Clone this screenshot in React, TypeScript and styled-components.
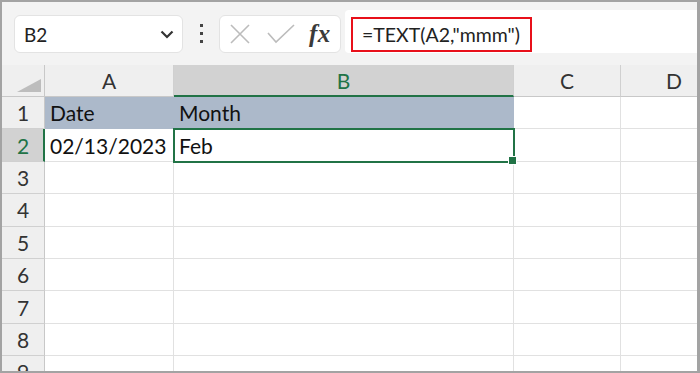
import React from 'react'
import styled, { createGlobalStyle, css } from 'styled-components'

const GlobalStyle = createGlobalStyle`
  html, body {
    margin: 0;
    padding: 0;
    background: #ffffff;
    overflow: hidden;
  }
  * {
    box-sizing: border-box;
  }
`

const green = '#217346'
const font = `Lato, 'Open Sans', sans-serif`

const Frame = styled.div`
  width: 700px;
  height: 373px;
  border: 2px solid #a3a3a3;
  border-right-width: 3px;
  background: #f3f3f3;
  display: flex;
  flex-direction: column;
  overflow: hidden;
  font-family: ${font};
`

const Toolbar = styled.div`
  height: 63px;
  flex: none;
  display: flex;
  align-items: flex-end;
  padding: 0 0 12px 12px;
`

const NameBox = styled.div`
  width: 169px;
  height: 38px;
  background: #fff;
  border: 1px solid #e3e3e3;
  border-radius: 6px;
  display: flex;
  align-items: center;
  justify-content: space-between;
  padding: 0 8px 0 9px;
  font-size: 19px;
  color: #222;
`

const Dots = styled.div`
  width: 3px;
  margin: 0 16px 10px 17px;
  display: flex;
  flex-direction: column;
  gap: 5px;

  span {
    display: block;
    width: 3px;
    height: 3px;
    background: #444;
  }
`

const ButtonBox = styled.div`
  width: 122px;
  height: 38px;
  background: #fff;
  border: 1px solid #e3e3e3;
  border-radius: 6px;
  display: flex;
  align-items: center;
  padding: 0 0 0 9px;
  gap: 16px;
`

const Fx = styled.span`
  font-family: 'Liberation Serif', 'DejaVu Serif', serif;
  font-style: italic;
  font-weight: bold;
  font-size: 25px;
  color: #3a3a3a;
  margin-left: -2px;
  letter-spacing: 0.5px;
`

const FormulaBar = styled.div`
  flex: 1;
  height: 43px;
  margin-left: 4px;
  background: #fff;
  border-radius: 4px 0 0 4px;
  padding: 7px 0 1px 6px;
  display: flex;
`

const FormulaText = styled.div`
  width: 181px;
  border: 2px solid #e8101a;
  display: flex;
  align-items: center;
  padding-left: 9px;
  font-size: 19.5px;
  color: #222;
`

const Sheet = styled.div`
  flex: 1;
  display: grid;
  grid-template-columns: 43px 129px 340px 107px 107px;
  grid-template-rows: 32px repeat(9, 32.4px);
  background: #fff;
  position: relative;
`

const Corner = styled.div`
  background: #efefef;
  border-right: 1px solid #c8c8c8;
  border-bottom: 1px solid #c8c8c8;
  position: relative;

  &::after {
    content: '';
    position: absolute;
    right: 3px;
    bottom: 4px;
    width: 0;
    height: 0;
    border-left: 24px solid transparent;
    border-bottom: 13px solid #bdbdbd;
  }
`

const ColHead = styled.div<{ $active?: boolean }>`
  background: ${(p) => (p.$active ? '#d2d2d2' : '#efefef')};
  border-right: 1px solid #d0d0d0;
  border-bottom: ${(p) => (p.$active ? `2px solid ${green}` : '1px solid #c8c8c8')};
  display: flex;
  align-items: center;
  justify-content: center;
  font-size: 21px;
  color: ${(p) => (p.$active ? green : '#333')};
  padding-top: ${(p) => (p.$active ? '1px' : '0')};
`

const RowHead = styled.div<{ $active?: boolean }>`
  background: ${(p) => (p.$active ? '#d2d2d2' : '#efefef')};
  border-right: ${(p) => (p.$active ? `2px solid ${green}` : '1px solid #c8c8c8')};
  border-bottom: 1px solid #d0d0d0;
  display: flex;
  align-items: center;
  justify-content: center;
  font-size: 21px;
  color: ${(p) => (p.$active ? green : '#333')};
  padding-left: ${(p) => (p.$active ? '1px' : '0')};
`

const Cell = styled.div<{ $header?: boolean; $selected?: boolean }>`
  border-right: 1px solid #e1e1e1;
  border-bottom: 1px solid #e1e1e1;
  display: flex;
  align-items: center;
  padding-left: 5px;
  font-size: 21px;
  color: #111;
  white-space: nowrap;
  overflow: hidden;
  ${(p) =>
    p.$header &&
    css`
      background: #acb9ca;
      border-color: #acb9ca;
    `}
  ${(p) =>
    p.$selected &&
    css`
      position: relative;
      overflow: visible;
      outline: 2px solid ${green};
      outline-offset: -1px;
      z-index: 1;
      &::after {
        content: '';
        position: absolute;
        right: -4px;
        bottom: -4px;
        width: 7px;
        height: 7px;
        background: ${green};
        border: 1px solid #fff;
      }
    `}
`

const XIcon = () => (
  <svg width="22" height="21" viewBox="0 0 22 21">
    <path d="M2 1 L20 19 M20 1 L2 19" stroke="#bcbcbc" strokeWidth="1.6" fill="none" />
  </svg>
)

const CheckIcon = () => (
  <svg width="28" height="20" viewBox="0 0 28 20">
    <path d="M1 9 L9 18 L27 1" stroke="#bcbcbc" strokeWidth="1.6" fill="none" />
  </svg>
)

const Chevron = () => (
  <svg width="14" height="9" viewBox="0 0 14 9">
    <path d="M1.5 1.5 L7 7 L12.5 1.5" stroke="#333" strokeWidth="2.2" fill="none" />
  </svg>
)

const columns = ['A', 'B', 'C', 'D']

type RowData = { [col: string]: string }

const rows: RowData[] = [
  { A: 'Date', B: 'Month' },
  { A: '02/13/2023', B: 'Feb' },
  {},
  {},
  {},
  {},
  {},
  {},
  {},
]

export default function App() {
  return (
    <>
      <GlobalStyle />
      <Frame>
        <Toolbar>
          <NameBox>
            <span>B2</span>
            <Chevron />
          </NameBox>
          <Dots>
            <span />
            <span />
            <span />
          </Dots>
          <ButtonBox>
            <XIcon />
            <CheckIcon />
            <Fx>fx</Fx>
          </ButtonBox>
          <FormulaBar>
            <FormulaText>=TEXT(A2,"mmm")</FormulaText>
          </FormulaBar>
        </Toolbar>
        <Sheet>
          <Corner />
          {columns.map((c) => (
            <ColHead key={c} $active={c === 'B'}>
              {c}
            </ColHead>
          ))}
          {rows.map((row, i) => (
            <React.Fragment key={i}>
              <RowHead $active={i === 1}>{i + 1}</RowHead>
              {columns.map((c) => (
                <Cell
                  key={c}
                  $header={i === 0 && (c === 'A' || c === 'B')}
                  $selected={i === 1 && c === 'B'}
                >
                  {row[c]}
                </Cell>
              ))}
            </React.Fragment>
          ))}
        </Sheet>
      </Frame>
    </>
  )
}
